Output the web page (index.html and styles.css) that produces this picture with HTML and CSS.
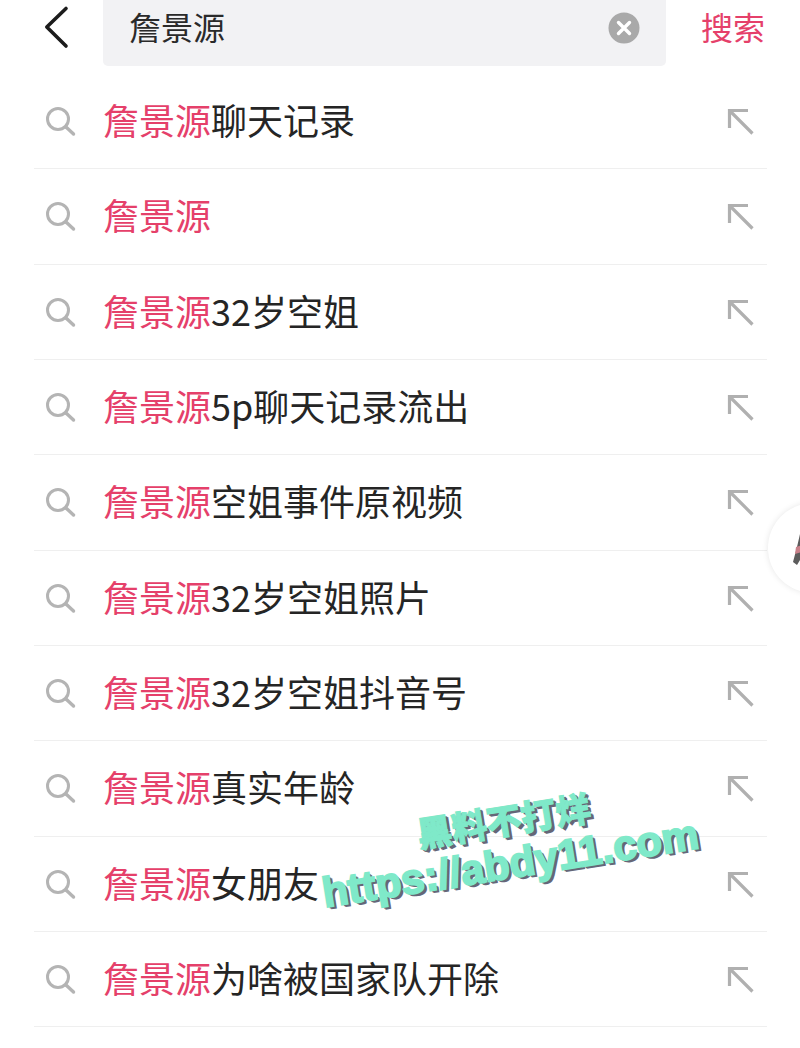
FILE: index.html
```html
<!DOCTYPE html>
<html lang="zh-CN">
<head>
    <meta charset="UTF-8">
    <meta name="viewport" content="width=device-width, initial-scale=1.0">
    <title>搜索</title>
    <link rel="stylesheet" href="styles.css">
</head>
<body>
    <svg class="icon-defs" width="0" height="0">
        <symbol id="icon-search" viewBox="0 0 32 32">
            <circle cx="13" cy="13" r="10.500" fill="none" stroke="currentColor" stroke-width="3"/>
            <path d="M21 21l7.500 7" fill="none" stroke="currentColor" stroke-width="3.400" stroke-linecap="round"/>
        </symbol>
        <symbol id="icon-fill" viewBox="0 0 28 28">
            <path d="M2.500 20V2.500H21M3 3l22.500 22.500" fill="none" stroke="currentColor" stroke-width="3.200"/>
        </symbol>
    </svg>

    <header class="search-bar">
        <svg class="back" width="26" height="46" viewBox="0 0 26 46">
            <path d="M22 4.500L2.800 23 22 42" fill="none" stroke="#1c1c1c" stroke-width="3.600" stroke-linecap="round" stroke-linejoin="round"/>
        </svg>
        <div class="search-box">
            <span class="search-text">詹景源</span>
            <svg class="clear" width="32" height="32" viewBox="0 0 32 32">
                <circle cx="16" cy="16" r="15.500" fill="#a9a9a9"/>
                <path d="M10.500 10.500l11 11M21.500 10.500l-11 11" stroke="#fff" stroke-width="3.400" stroke-linecap="round"/>
            </svg>
        </div>
        <span class="search-btn">搜索</span>
    </header>

    <ul class="suggest-list">
        <li class="suggest-item">
            <svg class="icon-search"><use href="#icon-search"/></svg>
            <span class="suggest-text"><em>詹景源</em>聊天记录</span>
            <svg class="icon-fill"><use href="#icon-fill"/></svg>
        </li>
        <li class="suggest-item">
            <svg class="icon-search"><use href="#icon-search"/></svg>
            <span class="suggest-text"><em>詹景源</em></span>
            <svg class="icon-fill"><use href="#icon-fill"/></svg>
        </li>
        <li class="suggest-item">
            <svg class="icon-search"><use href="#icon-search"/></svg>
            <span class="suggest-text"><em>詹景源</em>32岁空姐</span>
            <svg class="icon-fill"><use href="#icon-fill"/></svg>
        </li>
        <li class="suggest-item">
            <svg class="icon-search"><use href="#icon-search"/></svg>
            <span class="suggest-text"><em>詹景源</em>5p聊天记录流出</span>
            <svg class="icon-fill"><use href="#icon-fill"/></svg>
        </li>
        <li class="suggest-item">
            <svg class="icon-search"><use href="#icon-search"/></svg>
            <span class="suggest-text"><em>詹景源</em>空姐事件原视频</span>
            <svg class="icon-fill"><use href="#icon-fill"/></svg>
        </li>
        <li class="suggest-item">
            <svg class="icon-search"><use href="#icon-search"/></svg>
            <span class="suggest-text"><em>詹景源</em>32岁空姐照片</span>
            <svg class="icon-fill"><use href="#icon-fill"/></svg>
        </li>
        <li class="suggest-item">
            <svg class="icon-search"><use href="#icon-search"/></svg>
            <span class="suggest-text"><em>詹景源</em>32岁空姐抖音号</span>
            <svg class="icon-fill"><use href="#icon-fill"/></svg>
        </li>
        <li class="suggest-item">
            <svg class="icon-search"><use href="#icon-search"/></svg>
            <span class="suggest-text"><em>詹景源</em>真实年龄</span>
            <svg class="icon-fill"><use href="#icon-fill"/></svg>
        </li>
        <li class="suggest-item">
            <svg class="icon-search"><use href="#icon-search"/></svg>
            <span class="suggest-text"><em>詹景源</em>女朋友</span>
            <svg class="icon-fill"><use href="#icon-fill"/></svg>
        </li>
        <li class="suggest-item">
            <svg class="icon-search"><use href="#icon-search"/></svg>
            <span class="suggest-text"><em>詹景源</em>为啥被国家队开除</span>
            <svg class="icon-fill"><use href="#icon-fill"/></svg>
        </li>
    </ul>

    <!-- floating avatar bubble, only its left part is on screen -->
    <div class="float-bubble">
        <div class="float-circle">
            <svg width="12" height="38" viewBox="0 0 12 38">
                <path d="M0 32L4 17 7 4 11 0 12 0V36L7 30 4 35z" fill="#5c5c5c"/>
                <path d="M3 17L12 14V21L2 24z" fill="#c9818a"/>
            </svg>
        </div>
    </div>

    <div class="watermark">
        <div class="wm-title">黑料不打烊</div>
        <div class="wm-url">https://abdy11.com</div>
    </div>
</body>
</html>
```

FILE: styles.css
```css
* {
    box-sizing: border-box;
}
html, body {
    margin: 0;
    padding: 0;
}
body {
    position: relative;
    height: 1048px;
    overflow: hidden;
    background: #fff;
    font-family: "Noto Sans CJK SC", "Noto Sans", sans-serif;
    color: #222;
}
.icon-defs {
    position: absolute;
}
.search-bar {
    display: flex;
    align-items: flex-start;
    height: 74px;
    padding-left: 44px;
}
.back {
    flex: none;
    margin-top: 4px;
}
.search-box {
    flex: none;
    display: flex;
    align-items: center;
    justify-content: space-between;
    width: 563px;
    height: 66px;
    margin-left: 33px;
    padding: 0 26px 14px 26px;
    background: #f2f2f4;
    border-radius: 0 0 5px 5px;
}
.search-text {
    font-size: 32px;
    line-height: 56px;
    color: #2a2a2a;
}
.clear {
    margin-top: 4px;
}
.search-btn {
    margin-left: 35px;
    font-size: 32px;
    line-height: 52px;
    color: #e5406a;
}
.suggest-list {
    list-style: none;
    margin: 0 33px 0 34px;
    padding: 0;
}
.suggest-item {
    display: flex;
    align-items: center;
    height: 95.33px;
    padding-bottom: 4px;
    border-bottom: 1px solid #efefef;
}
.icon-search {
    flex: none;
    width: 32px;
    height: 32px;
    margin: 6px 0 0 11px;
    color: #b4b4b4;
}
.suggest-text {
    flex: 1;
    margin-left: 26px;
    font-size: 36px;
    line-height: 50px;
    color: #252525;
}
.suggest-text em {
    font-style: normal;
    color: #e5406a;
}
.icon-fill {
    flex: none;
    width: 28px;
    height: 28px;
    margin: 6px 12px 0 0;
    color: #b0b0b0;
}
.float-bubble {
    position: absolute;
    top: 495px;
    right: 0;
    width: 44px;
    height: 106px;
    padding: 8px 0 0 12px;
    overflow: hidden;
}
.float-circle {
    width: 90px;
    height: 90px;
    padding: 27px 0 0 25px;
    background: #fff;
    border-radius: 50%;
    box-shadow: 0 0 6px rgba(0, 0, 0, 0.1);
}
.watermark {
    position: absolute;
    top: 797px;
    left: 311px;
    width: 392px;
    transform: rotate(-9deg);
    font-family: "Liberation Sans", "Noto Sans CJK SC", sans-serif;
    font-weight: 700;
    color: #7fe9c9;
    text-align: center;
    text-shadow: 2px 2px 0 #667, 3px 3px 0 #667;
}
.wm-title {
    font-family: "Noto Sans CJK SC", sans-serif;
    font-weight: 900;
    font-size: 35px;
    line-height: 44px;
    -webkit-text-stroke: 1px #7fe9c9;
}
.wm-url {
    font-size: 42px;
    line-height: 46px;
    white-space: nowrap;
    -webkit-text-stroke: 2px #7fe9c9;
}
```
